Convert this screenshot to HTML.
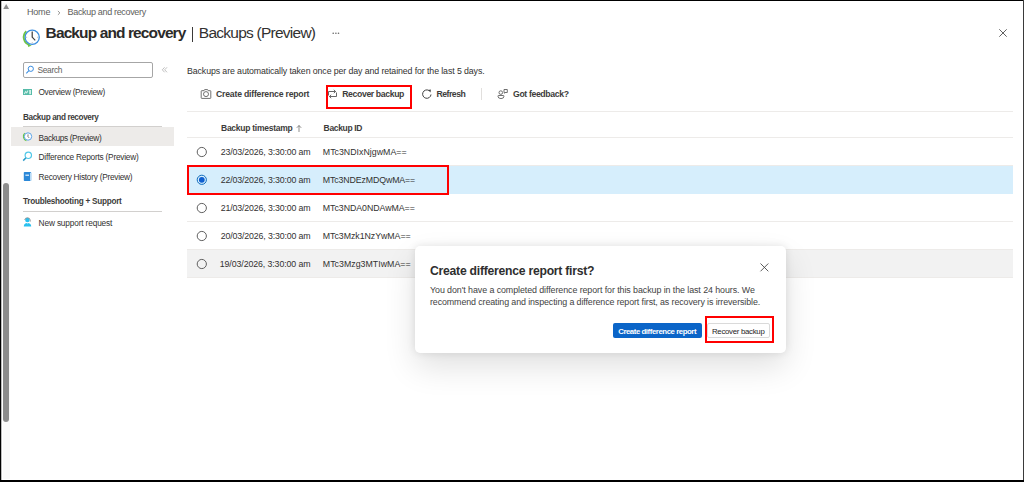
<!DOCTYPE html>
<html><head><meta charset="utf-8">
<style>
html,body{margin:0;padding:0;}
body{width:1024px;height:482px;position:relative;overflow:hidden;background:#fff;font-family:"Liberation Sans",sans-serif;color:#323130;}
.t{position:absolute;white-space:nowrap;line-height:1;}
.b{font-weight:bold;}
.abs{position:absolute;}
svg{position:absolute;overflow:visible;}
</style></head><body>
<!-- frame -->
<div class="abs" style="left:0;top:0;width:1024px;height:1px;background:#000"></div>
<div class="abs" style="left:0;top:0;width:1px;height:482px;background:#000"></div>
<div class="abs" style="left:1px;top:1px;width:1px;height:480px;background:#bbb"></div>
<div class="abs" style="left:1023px;top:0;width:1px;height:482px;background:#3a3a3a"></div>
<div class="abs" style="left:0;top:480px;width:1024px;height:2px;background:#000"></div>

<!-- scrollbar -->
<div class="abs" style="left:3px;top:3px;width:7px;height:476px;background:#f9f9f9"></div>
<svg style="left:0;top:0" width="12" height="12"><path d="M3.3 9 L6.2 4 L9.1 9 Z" fill="#8a8a8a"/></svg>
<div class="abs" style="left:3px;top:183px;width:6px;height:239px;background:#8c8c8c;border-radius:3px"></div>

<!-- breadcrumb -->
<div class="t" id="bc1" style="left:27.00px;top:8px;font-size:9px;letter-spacing:-0.200px;color:#605e5c">Home</div>
<svg style="left:56px;top:9px" width="6" height="8"><path d="M1.9 2 L3.9 3.9 L1.9 5.8" fill="none" stroke="#8a8886" stroke-width="0.9"/></svg>
<div class="t" id="bc2" style="left:67.60px;top:8px;font-size:9px;letter-spacing:-0.333px;color:#605e5c">Backup and recovery</div>

<!-- title -->
<svg style="left:20px;top:26px" width="24" height="24" viewBox="0 0 24 24">
  <path d="M6.3 5.3 A8.1 8.1 0 0 0 9.6 19" fill="none" stroke="#70c445" stroke-width="1.9"/>
  <path d="M7.6 18.2 L11.8 19.6 L8.2 21 Z" fill="#70c445"/>
  <circle cx="12.2" cy="11.2" r="7.1" fill="#fff" stroke="#3c8fe0" stroke-width="1.3"/>
  <g fill="#9a9a9a"><rect x="11.8" y="5.2" width="0.8" height="0.9"/><rect x="11.8" y="16.3" width="0.8" height="0.9"/><rect x="6.2" y="10.8" width="0.9" height="0.8"/><rect x="17.3" y="10.8" width="0.9" height="0.8"/></g>
  <path d="M12.2 11.4 V5.8" stroke="#3a3a3a" stroke-width="1.2"/>
  <path d="M12.2 11.2 L15.2 14.4" stroke="#3a3a3a" stroke-width="1.1"/>
</svg>
<div class="t b" id="ttl1" style="left:45.60px;top:25px;font-size:15.5px;letter-spacing:-0.889px;color:#2b2a29">Backup and recovery</div>
<div class="abs" style="left:192px;top:27px;width:1.4px;height:15px;background:#3b3a39"></div>
<div class="t" id="ttl2" style="left:198.80px;top:25px;font-size:15.5px;letter-spacing:-0.750px;color:#323130">Backups (Preview)</div>
<svg style="left:330px;top:30px" width="12" height="6"><circle cx="3.2" cy="3.3" r="0.8" fill="#666"/><circle cx="5.9" cy="3.3" r="0.8" fill="#666"/><circle cx="8.5" cy="3.3" r="0.8" fill="#666"/></svg>
<svg style="left:999px;top:29px" width="8" height="8"><path d="M0.3 0.3 L7.7 7.7 M7.7 0.3 L0.3 7.7" stroke="#616161" stroke-width="1"/></svg>

<!-- sidebar -->
<div class="abs" style="left:23px;top:62px;width:128px;height:14px;border:1px solid #a6a6a6;border-radius:2px"></div>
<svg style="left:25px;top:65px" width="10" height="10"><circle cx="5.8" cy="3.8" r="2.6" fill="none" stroke="#3a8de0" stroke-width="1"/><path d="M3.9 5.7 L1.3 8.3" stroke="#3a8de0" stroke-width="1.1"/></svg>
<div class="t" id="srch" style="left:37.40px;top:66px;font-size:8.4px;letter-spacing:-0.300px;color:#605e5c">Search</div>
<svg style="left:160px;top:65px" width="10" height="10"><path d="M4.6 2.3 L2.3 4.8 L4.6 7.3 M7 2.3 L4.7 4.8 L7 7.3" fill="none" stroke="#b0b0b0" stroke-width="0.8"/></svg>

<svg style="left:23px;top:89px" width="9" height="6"><rect x="0" y="0" width="9" height="6" fill="#55bba8"/><path d="M1.3 5 L2.6 2.6 L3.8 3.8 L5 1.6" stroke="#d4f0e9" stroke-width="1.1" fill="none"/><rect x="6.2" y="1" width="1.8" height="4.2" fill="#d4f0e9"/></svg>
<div class="t" id="nav0" style="left:38.40px;top:88px;font-size:8.3px;letter-spacing:-0.294px">Overview (Preview)</div>

<div class="t b" id="hdr1" style="left:23.00px;top:114px;font-size:8.2px;letter-spacing:-0.389px;color:#3d3c3b">Backup and recovery</div>
<div class="abs" style="left:23px;top:126px;width:139px;height:1px;background:#d2d0ce"></div>
<div class="abs" style="left:11px;top:127px;width:163px;height:19px;background:#edebe9"></div>
<svg style="left:23px;top:132px" width="10" height="10" viewBox="0 0 10 10"><path d="M1.75 1.25 A4.6 4.6 0 0 0 3.4 8.8" fill="none" stroke="#6cc644" stroke-width="1.2"/><circle cx="5" cy="4.5" r="3.7" fill="#fff" stroke="#5ba3e6" stroke-width="1"/><path d="M5 4.7 V2.4 M5 4.7 L6.2 5.9" stroke="#555" stroke-width="0.8"/></svg>
<div class="t" id="nav1" style="left:38.60px;top:134px;font-size:8.3px;letter-spacing:-0.381px">Backups (Preview)</div>

<svg style="left:22px;top:151px" width="11" height="11"><circle cx="6.3" cy="4.3" r="3.2" fill="none" stroke="#50c8e8" stroke-width="1.2"/><path d="M4 6.8 L1.2 9.6" stroke="#2d9cc8" stroke-width="1.5"/></svg>
<div class="t" id="nav2" style="left:38.60px;top:153px;font-size:8.3px;letter-spacing:-0.230px">Difference Reports (Preview)</div>

<svg style="left:23px;top:172px" width="9" height="10"><rect x="0.8" y="0" width="7.4" height="9" rx="0.8" fill="#2b88d8"/><rect x="7" y="0.8" width="1.2" height="8" fill="#b9dcf7"/><rect x="2.4" y="2.6" width="3.6" height="1.2" fill="#e8f3fc"/></svg>
<div class="t" id="nav3" style="left:38.60px;top:173px;font-size:8.3px;letter-spacing:-0.260px">Recovery History (Preview)</div>

<div class="t b" id="hdr2" style="left:23.00px;top:198px;font-size:8.2px;letter-spacing:-0.250px;color:#3d3c3b">Troubleshooting + Support</div>
<div class="abs" style="left:23px;top:211px;width:139px;height:1px;background:#d2d0ce"></div>
<svg style="left:22px;top:216px" width="11" height="12"><circle cx="5.4" cy="4" r="2.3" fill="#29c0ef"/><path d="M2.6 4 A2.9 2.9 0 0 1 8.3 4.2 L8.3 5.6" fill="none" stroke="#8a8a8a" stroke-width="0.8"/><path d="M1.8 10.6 Q1.8 6.9 5.4 6.9 Q9.2 6.9 9.2 10.6 Z" fill="#29c0ef"/><path d="M5 7 L5.4 8.6 L5.8 7" fill="#dff6fd"/></svg>
<div class="t" id="nav4" style="left:38.60px;top:219px;font-size:8.3px;letter-spacing:-0.155px">New support request</div>

<!-- main -->
<div class="t" id="info" style="left:187.00px;top:67px;font-size:8.8px;letter-spacing:-0.104px">Backups are automatically taken once per day and retained for the last 5 days.</div>

<!-- toolbar -->
<svg style="left:200px;top:88px" width="12" height="12" viewBox="0 0 12 12"><path d="M1.7 2.7 H4 L4.6 1.6 H7.6 L8.2 2.7 H10.3 Q10.8 2.7 10.8 3.2 V9.8 Q10.8 10.4 10.3 10.4 H1.7 Q1.2 10.4 1.2 9.8 V3.2 Q1.2 2.7 1.7 2.7 Z" fill="none" stroke="#616161" stroke-width="0.9"/><circle cx="6" cy="6.1" r="2.5" fill="none" stroke="#616161" stroke-width="0.9"/></svg>
<div class="t b" id="tb1" style="left:216.00px;top:90px;font-size:8.7px;letter-spacing:-0.217px;color:#3d3c3b">Create difference report</div>

<svg style="left:326px;top:88px" width="12" height="12" viewBox="0 0 12 12"><path d="M2.5 7.5 V3.5 H9.5 M7.8 1.8 L9.6 3.5 L7.8 5.2" fill="none" stroke="#555" stroke-width="0.9"/><path d="M10.5 4.5 V8.5 H3.5 M5.2 6.8 L3.4 8.5 L5.2 10.2" fill="none" stroke="#555" stroke-width="0.9"/></svg>
<div class="t b" id="tb2" style="left:342.20px;top:90px;font-size:8.7px;letter-spacing:-0.377px;color:#3d3c3b">Recover backup</div>
<div class="abs" style="left:326px;top:85px;width:82px;height:20px;border:2px solid #f00"></div>

<svg style="left:420px;top:88px" width="12" height="12" viewBox="0 0 12 12"><path d="M11 6.47 A4.2 4.2 0 1 1 8.9 2.46" fill="none" stroke="#424242" stroke-width="1"/><path d="M8.1 1.9 L10.9 1.4 L10.5 4.4 Z" fill="#424242"/></svg>
<div class="t b" id="tb3" style="left:436.40px;top:90px;font-size:8.7px;letter-spacing:-0.483px;color:#3d3c3b">Refresh</div>

<div class="abs" style="left:481px;top:88px;width:1px;height:12px;background:#e1dfdd"></div>

<svg style="left:496px;top:88px" width="12" height="12" viewBox="0 0 12 12"><circle cx="4.8" cy="4.6" r="1.8" fill="none" stroke="#616161" stroke-width="0.9"/><path d="M2.4 7.5 H7.4 Q8 7.5 8 8.1 Q8 10.6 5 10.6 Q2 10.6 1.9 8.1 Q1.9 7.5 2.4 7.5 Z" fill="none" stroke="#616161" stroke-width="0.9"/><path d="M8 1.5 H11.3 V4.5 H9 L8.5 5.3 V4.5 H8 Z" fill="none" stroke="#616161" stroke-width="0.9"/></svg>
<div class="t b" id="tb4" style="left:513.00px;top:90px;font-size:8.7px;letter-spacing:-0.367px;color:#3d3c3b">Got feedback?</div>

<div class="abs" style="left:187px;top:111px;width:826px;height:1px;background:#edebe9"></div>

<!-- table header -->
<div class="t b" id="th1" style="left:221.00px;top:124px;font-size:8.5px;letter-spacing:-0.260px;color:#3d3c3b">Backup timestamp</div>
<svg style="left:295px;top:123.5px" width="8" height="9"><path d="M4 8 V1.5 M1.8 3.8 L4 1.5 L6.2 3.8" fill="none" stroke="#605e5c" stroke-width="0.7"/></svg>
<div class="t b" id="th2" style="left:323.60px;top:124px;font-size:8.5px;letter-spacing:-0.336px;color:#3d3c3b">Backup ID</div>
<div class="abs" style="left:187px;top:137px;width:826px;height:1px;background:#edebe9"></div>

<!-- rows -->
<div class="abs" style="left:187px;top:165px;width:826px;height:1px;background:#edebe9"></div>
<div class="abs" style="left:187px;top:166px;width:826px;height:28px;background:#d6eefc"></div>
<div class="abs" style="left:187px;top:221px;width:826px;height:1px;background:#edebe9"></div>
<div class="abs" style="left:187px;top:249px;width:826px;height:1px;background:#edebe9"></div>
<div class="abs" style="left:187px;top:250px;width:826px;height:27px;background:#f2f2f2"></div>
<div class="abs" style="left:187px;top:277px;width:826px;height:1px;background:#edebe9"></div>

<svg style="left:196px;top:147px" width="12" height="12"><circle cx="5.8" cy="5" r="4.6" fill="none" stroke="#616161" stroke-width="1"/></svg>
<div class="t" id="r1a" style="left:220.80px;top:148px;font-size:8.8px;letter-spacing:-0.152px">23/03/2026, 3:30:00 am</div>
<div class="t" id="r1b" style="left:322.80px;top:148px;font-size:8.8px;letter-spacing:0.014px">MTc3NDIxNjgwMA==</div>

<svg style="left:196px;top:175px" width="12" height="12"><circle cx="5.8" cy="4.8" r="4.6" fill="none" stroke="#0f6cbd" stroke-width="1"/><circle cx="5.8" cy="4.8" r="2.9" fill="#0f5fcf"/></svg>
<div class="t" id="r2a" style="left:220.80px;top:176px;font-size:8.8px;letter-spacing:-0.152px">22/03/2026, 3:30:00 am</div>
<div class="t" id="r2b" style="left:322.80px;top:176px;font-size:8.8px;letter-spacing:-0.126px">MTc3NDEzMDQwMA==</div>
<div class="abs" style="left:187px;top:165px;width:258px;height:26px;border:2px solid #f00"></div>

<svg style="left:196px;top:203px" width="12" height="12"><circle cx="5.8" cy="5" r="4.6" fill="none" stroke="#616161" stroke-width="1"/></svg>
<div class="t" id="r3a" style="left:220.80px;top:204px;font-size:8.8px;letter-spacing:-0.152px">21/03/2026, 3:30:00 am</div>
<div class="t" id="r3b" style="left:322.80px;top:204px;font-size:8.8px;letter-spacing:-0.046px">MTc3NDA0NDAwMA==</div>

<svg style="left:196px;top:231px" width="12" height="12"><circle cx="5.8" cy="5" r="4.6" fill="none" stroke="#616161" stroke-width="1"/></svg>
<div class="t" id="r4a" style="left:220.80px;top:232px;font-size:8.8px;letter-spacing:-0.152px">20/03/2026, 3:30:00 am</div>
<div class="t" id="r4b" style="left:322.80px;top:232px;font-size:8.8px;letter-spacing:-0.040px">MTc3Mzk1NzYwMA==</div>

<svg style="left:196px;top:259px" width="12" height="12"><circle cx="5.8" cy="5" r="4.6" fill="none" stroke="#616161" stroke-width="1"/></svg>
<div class="t" id="r5a" style="left:219.80px;top:260px;font-size:8.8px;letter-spacing:-0.104px">19/03/2026, 3:30:00 am</div>
<div class="t" id="r5b" style="left:322.80px;top:260px;font-size:8.8px;letter-spacing:0.021px">MTc3Mzg3MTIwMA==</div>

<!-- dialog -->
<div class="abs" style="left:415px;top:246px;width:371px;height:107px;background:#fff;border-radius:5px;box-shadow:0 0 8px rgba(0,0,0,0.1),0 14px 32px rgba(0,0,0,0.12)"></div>
<div class="t b" id="dt" style="left:430.00px;top:265px;font-size:12.2px;letter-spacing:-0.250px;color:#2e2e2e">Create difference report first?</div>
<svg style="left:760px;top:263px" width="9" height="9"><path d="M0.5 0.5 L8.3 8.3 M8.3 0.5 L0.5 8.3" stroke="#4a4a4a" stroke-width="0.9"/></svg>
<div class="t" id="d1" style="left:430.00px;top:286px;font-size:8.9px;color:#424242;letter-spacing:-0.080px">You don't have a completed difference report for this backup in the last 24 hours. We</div>
<div class="t" id="d2" style="left:430.00px;top:298px;font-size:8.9px;color:#424242;letter-spacing:-0.108px">recommend creating and inspecting a difference report first, as recovery is irreversible.</div>

<div class="abs" style="left:613px;top:323px;width:89px;height:15px;background:#0b65c8;border-radius:2px"></div>
<div class="t b" id="bt1" style="left:618.20px;top:328px;font-size:7.8px;letter-spacing:-0.439px;color:#fff">Create difference report</div>
<div class="abs" style="left:707px;top:323px;width:61px;height:13px;border:1px solid #dadada;border-radius:2px;background:#fff"></div>
<div class="t" id="bt2" style="left:712.00px;top:328px;font-size:7.8px;letter-spacing:-0.276px;color:#242424">Recover backup</div>
<div class="abs" style="left:705px;top:316px;width:65px;height:23px;border:2px solid #f00"></div>

</body></html>
